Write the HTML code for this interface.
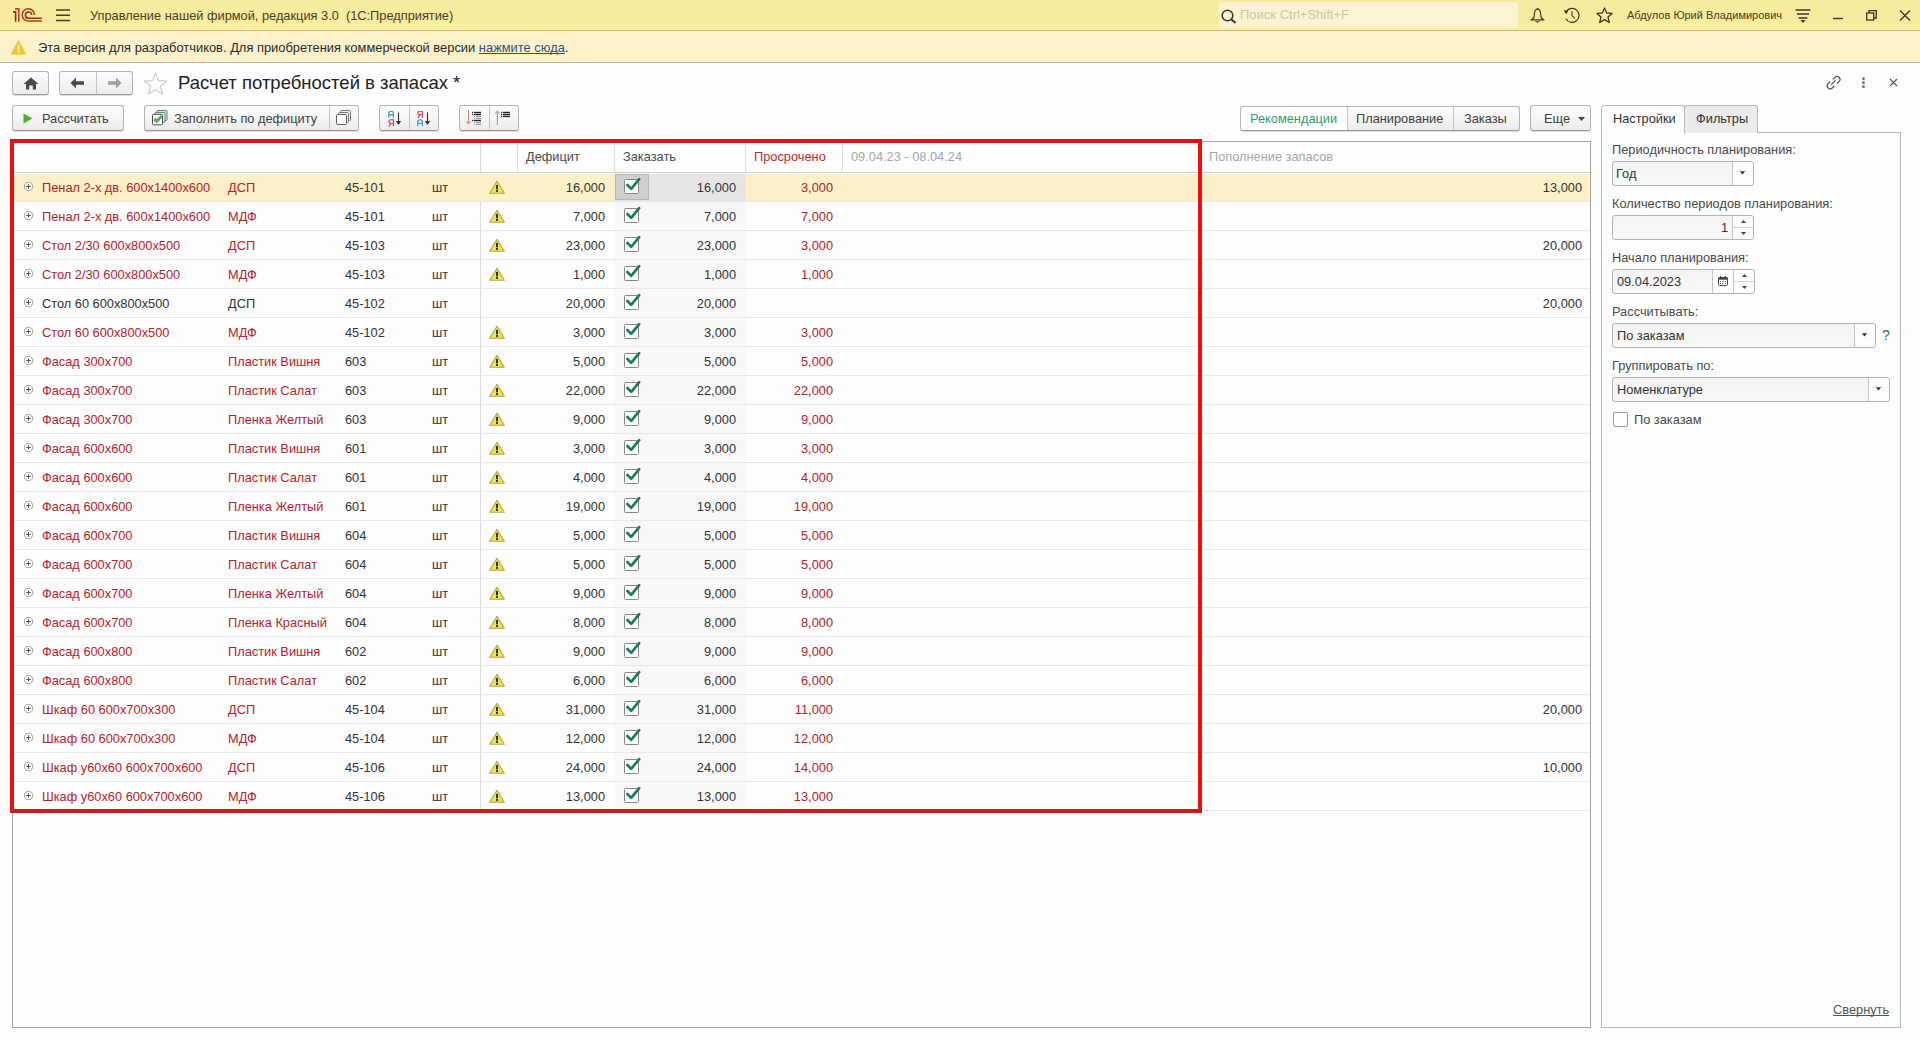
<!DOCTYPE html>
<html><head><meta charset="utf-8"><title>1C</title>
<style>
*{box-sizing:border-box;margin:0;padding:0}
html,body{width:1920px;height:1040px;overflow:hidden}
body{position:relative;background:#fdfdfd;font-family:"Liberation Sans",sans-serif;font-size:12.8px;color:#333}
.abs{position:absolute}
a{text-decoration-skip-ink:none}
svg{display:block}
/* top bar */
#topbar{position:absolute;left:0;top:0;width:1920px;height:31px;background:linear-gradient(#f6eb9f 0,#f6eb9f 65%,#f9f09a 100%);border-bottom:1px solid #c4b97e}
#warnbar{position:absolute;left:0;top:31px;width:1920px;height:32px;background:#fdf1c9;border-bottom:1px solid #bab6a4}
.tb-title{position:absolute;left:90px;top:8px;font-size:12.8px;color:#4a4020;white-space:pre;line-height:15px}
.search{position:absolute;left:1219px;top:2px;width:299px;height:26px;background:#fbf3d2;border-radius:2px}
.search span{position:absolute;left:21px;top:5px;color:#cfc6a6;font-size:13px;line-height:15px}
.user{position:absolute;left:1627px;top:8px;font-size:11px;color:#4a4020;line-height:14px}
.warn-text{position:absolute;left:38px;top:40px;font-size:12.9px;color:#2a2a2a;line-height:15px}
.warn-text a{color:#34507a;text-decoration:underline;text-decoration-skip-ink:none}
/* buttons */
.btn{position:absolute;height:26px;border:1px solid #b4b4b4;border-bottom-color:#9a9a9a;border-radius:3px;background:linear-gradient(#fdfdfd,#ececec);box-shadow:0 1px 0 rgba(0,0,0,.12)}
.btn .lbl{position:absolute;top:5px;line-height:15px;font-size:12.8px;color:#404040;white-space:nowrap}
.sep{position:absolute;top:0;bottom:0;width:1px;background:#c4c4c4}
.title{position:absolute;left:178px;top:73px;font-size:18.5px;color:#222;line-height:20px;white-space:nowrap}
/* table */
#table{position:absolute;left:12px;top:141px;width:1579px;height:887px;border:1px solid #a4a4a4;background:#fdfdfd}
.hdr{position:absolute;left:0;top:0;width:100%;height:31px;border-bottom:1px solid #cfcfcf;background:#fefefe}
.hdr .h{position:absolute;top:7px;line-height:15px;color:#4a4a4a;white-space:nowrap}
.hdr .hs{position:absolute;top:0;height:30px;width:1px;background:#dedede}
.vline{position:absolute;left:467px;top:0;width:1px;height:669px;background:#dadada}
.row{position:absolute;left:0;width:1577px;height:29px;border-bottom:1px solid #e8e8e8}
.row .t{position:absolute;top:0;line-height:29px;white-space:nowrap;color:#333}
.row .t.r{color:#b5232f}
.row.sel .selbg{position:absolute;left:0;right:0;top:1px;height:27px;background:#fbf0c6}
.exw{position:absolute;left:10px;top:8px}
.wiw{position:absolute;left:476px;top:7px}
.cbw{position:absolute;left:611px;top:2px}
.selq{position:absolute;left:602px;top:1px;width:131px;height:27px;background:#e5e5e5}
.selc{position:absolute;left:602px;top:1px;width:34px;height:26px;background:#cfcfcf;border:1px solid #b6b6b6}
/* right panel */
.tab{position:absolute;top:105px;height:28px;border:1px solid #b9b9b9;border-bottom:none;border-radius:3px 3px 0 0}
.tab span{position:absolute;top:5px;line-height:15px;color:#333;white-space:nowrap}
#panel{position:absolute;left:1601px;top:132px;width:300px;height:896px;border:1px solid #b9b9b9;background:#fdfdfd}
.lab{position:absolute;left:1612px;line-height:15px;color:#4a4a4a;white-space:nowrap}
.inp{position:absolute;height:25px;border:1px solid #b3b3b3;border-radius:3px;background:linear-gradient(#f3f4f3,#f7f8f7)}
.inp .v{position:absolute;top:4px;line-height:15px;color:#333;white-space:nowrap}
.inp .bt{position:absolute;top:0;bottom:0;right:0;background:#fdfdfd;border-left:1px solid #c4c4c4;border-radius:0 3px 3px 0}
.red{position:absolute;left:10px;top:139px;width:1192px;height:674px;border:4px solid;border-color:#d41616 #e80f0f #d41616 #e80f0f}

</style></head>
<body>
<div id="topbar">
  <svg class="abs" style="left:8px;top:4px" width="40" height="22" viewBox="0 0 40 22">
    <path d="M5 7.9 H7.6 V17.8" fill="none" stroke="#7e3412" stroke-width="1.6"/>
    <path d="M7 4.9 H10.8 V17.8" fill="none" stroke="#c2401e" stroke-width="1.6"/>
    <path d="M26.5 11 A6.15 6.15 0 1 0 20.35 17.1 H33.8" fill="none" stroke="#b8391a" stroke-width="1.5"/>
    <path d="M23.8 11 A3.2 3.2 0 1 0 20.6 14.3 H33.8" fill="none" stroke="#8e3614" stroke-width="1.5"/>
  </svg>
  <svg class="abs" style="left:56px;top:9px" width="14" height="13" viewBox="0 0 14 13"><path d="M0 1 H14 M0 6.3 H14 M0 11.5 H14" stroke="#4a4020" stroke-width="1.4"/></svg>
  <div class="tb-title">Управление нашей фирмой, редакция 3.0  (1С:Предприятие)</div>
  <div class="search">
    <svg class="abs" style="left:2px;top:7px" width="16" height="15" viewBox="0 0 16 15"><circle cx="6.5" cy="6.5" r="5.3" fill="none" stroke="#3a3420" stroke-width="1.5"/><path d="M10.5 10.5 L14.5 14" stroke="#3a3420" stroke-width="2"/></svg>
    <span>Поиск Ctrl+Shift+F</span>
  </div>
  <svg class="abs" style="left:1530px;top:7px" width="15" height="17" viewBox="0 0 15 17"><path d="M7.5 2.2 C5.4 2.2 4.6 4 4.4 6.5 L4 10 C3.7 11.3 2.3 12.2 1 12.9 H14 C12.7 12.2 11.3 11.3 11 10 L10.6 6.5 C10.4 4 9.6 2.2 7.5 2.2 Z" fill="none" stroke="#3f3820" stroke-width="1.15" stroke-linejoin="round"/><circle cx="7.5" cy="1.6" r="0.9" fill="#3f3820"/><path d="M4.6 14.3 H10.4 L7.5 15.8 Z" fill="#3f3820"/></svg>
  <svg class="abs" style="left:1562px;top:6px" width="20" height="19" viewBox="0 0 20 19"><path d="M3.94 12.8 A7 7 0 1 0 4.6 5" fill="none" stroke="#3f3820" stroke-width="1.2"/><path d="M1.6 4.6 L6.4 4.2 L4.3 8.2 Z" fill="#3f3820"/><path d="M10 5.3 V9.6 L12.9 12.3" fill="none" stroke="#3f3820" stroke-width="1.1"/></svg>
  <svg class="abs" style="left:1596px;top:7px" width="17" height="17" viewBox="0 0 17 17"><path d="M8.5 1 L10.7 6 L16 6.4 L12 10 L13.3 15.5 L8.5 12.6 L3.7 15.5 L5 10 L1 6.4 L6.3 6 Z" fill="none" stroke="#3f3820" stroke-width="1.3" stroke-linejoin="round"/></svg>
  <div class="user">Абдулов Юрий Владимирович</div>
  <svg class="abs" style="left:1795px;top:9px" width="16" height="15" viewBox="0 0 16 15"><path d="M0.5 1 H15.5 M2 5 H14 M3.5 9 H12.5" stroke="#3f3820" stroke-width="1.3"/><path d="M5.5 11 H10.5 L8 14 Z" fill="#3f3820"/></svg>
  <svg class="abs" style="left:1833px;top:17px" width="10" height="3" viewBox="0 0 10 3"><path d="M0 1.5 H10" stroke="#3f3820" stroke-width="1.4"/></svg>
  <svg class="abs" style="left:1866px;top:10px" width="11" height="11" viewBox="0 0 11 11"><rect x="0.7" y="3" width="7" height="7" fill="none" stroke="#3f3820" stroke-width="1.3"/><path d="M3 3 V0.7 H10.3 V8 H7.7" fill="none" stroke="#3f3820" stroke-width="1.3"/></svg>
  <svg class="abs" style="left:1899px;top:10px" width="12" height="11" viewBox="0 0 12 11"><path d="M1 0.5 L11 10.5 M11 0.5 L1 10.5" stroke="#3f3820" stroke-width="1.3"/></svg>
</div>
<div id="warnbar">
  <svg class="abs" style="left:11px;top:8px" width="16" height="16" viewBox="0 0 16 16"><path d="M7.5 1.3 L14.9 15.2 H0.1 Z" fill="#ebc82e" stroke="#ebc82e" stroke-width="0.6" stroke-linejoin="round"/><rect x="6.8" y="5.6" width="1.5" height="5.2" fill="#fff6d0"/><rect x="6.8" y="11.8" width="1.5" height="1.6" fill="#fff6d0"/></svg>
</div>
<div class="warn-text">Эта версия для разработчиков. Для приобретения коммерческой версии <a>нажмите сюда</a>.</div>

<!-- title row -->
<div class="btn" style="left:12px;top:71px;width:37px;height:24px">
  <svg class="abs" style="left:10px;top:4.5px" width="16" height="13" viewBox="0 0 16 13"><path d="M8 0.5 L15.5 7 H13 V12.5 H9.8 V8.5 H6.2 V12.5 H3 V7 H0.5 Z" fill="#4a4a4a"/></svg>
</div>
<div class="btn" style="left:59px;top:71px;width:74px;height:24px">
  <div class="sep" style="left:36px"></div>
  <svg class="abs" style="left:10px;top:5px" width="15" height="12" viewBox="0 0 15 12"><path d="M0.5 6 L6 0.5 V4.3 H14 V7.7 H6 V11.5 Z" fill="#4a4a4a"/></svg>
  <svg class="abs" style="left:47px;top:5px" width="15" height="12" viewBox="0 0 15 12"><path d="M14.5 6 L9 0.5 V4.3 H1 V7.7 H9 V11.5 Z" fill="#a0a0a0"/></svg>
</div>
<svg class="abs" style="left:143px;top:72px" width="25" height="23" viewBox="0 0 25 23"><path d="M12.5 1 L15.6 8.6 L23.8 9 L17.4 14.2 L19.6 22 L12.5 17.6 L5.4 22 L7.6 14.2 L1.2 9 L9.4 8.6 Z" fill="none" stroke="#c8c8c8" stroke-width="1.1" stroke-linejoin="round"/></svg>
<div class="title">Расчет потребностей в запасах *</div>
<svg class="abs" style="left:1825px;top:74px" width="17" height="17" viewBox="0 0 17 17"><path d="M7.8 5.4 L10.2 3 A3 3 0 0 1 14.4 7.2 L12 9.6 M5.2 7.6 L2.8 10 A3 3 0 0 0 7 14.2 L9.4 11.8 M6.2 10.8 L10.6 6.4" fill="none" stroke="#555" stroke-width="1.25"/></svg>
<svg class="abs" style="left:1861px;top:77px" width="5" height="12" viewBox="0 0 5 12"><circle cx="2.5" cy="1.7" r="1.4" fill="#666"/><circle cx="2.5" cy="5.7" r="1.4" fill="#666"/><circle cx="2.5" cy="9.7" r="1.4" fill="#666"/></svg>
<svg class="abs" style="left:1889px;top:78px" width="9" height="9" viewBox="0 0 9 9"><path d="M1 1 L8 8 M8 1 L1 8" stroke="#555" stroke-width="1.1"/></svg>

<!-- toolbar -->
<div class="btn" style="left:12px;top:105px;width:112px">
  <svg class="abs" style="left:10px;top:7px" width="10" height="11" viewBox="0 0 10 11"><path d="M0.5 0.5 L9.5 5.5 L0.5 10.5 Z" fill="#4caf2a"/></svg>
  <span class="lbl" style="left:29px">Рассчитать</span>
</div>
<div class="btn" style="left:144px;top:105px;width:215px">
  <svg class="abs" style="left:7px;top:4px" width="16" height="16" viewBox="0 0 16 16"><rect x="5" y="0.5" width="10" height="10" rx="1" fill="#e4f2e4" stroke="#5f7a6a"/><rect x="3" y="2.4" width="10" height="10" rx="1" fill="#def0dc" stroke="#56806a"/><rect x="0.5" y="4.4" width="10" height="10.4" rx="1" fill="#fff" stroke="#4a5058"/><path d="M2.4 9 L4.8 11.4 L9.6 6.2" fill="none" stroke="#2f7d2a" stroke-width="2.6"/><path d="M2.4 9 L4.8 11.4 L9.6 6.2" fill="none" stroke="#6cc04e" stroke-width="1.4"/></svg>
  <span class="lbl" style="left:29px">Заполнить по дефициту</span>
  <div class="sep" style="left:184px"></div>
  <svg class="abs" style="left:191px;top:4px" width="15" height="15" viewBox="0 0 15 15"><rect x="4.5" y="0.5" width="10" height="10" rx="1.2" fill="#eef2f2" stroke="#707878"/><rect x="2.5" y="2.5" width="10" height="10" rx="1.2" fill="#f2f5f5" stroke="#707878"/><rect x="0.5" y="4.5" width="10" height="10" rx="1.2" fill="#fff" stroke="#585c5e"/></svg>
</div>
<div class="btn" style="left:379px;top:105px;width:60px">
  <div class="sep" style="left:29px"></div>
  <svg class="abs" style="left:8px;top:5px" width="15" height="16" viewBox="0 0 15 16"><path d="M0.8 6.8 V2.5999999999999996 A2.3 2.3 0 0 1 5.3999999999999995 2.5999999999999996 V6.8 M0.8 3.9 H5.3999999999999995" fill="none" stroke="#3b8cc4" stroke-width="1.1"/><path d="M5.3999999999999995 15.2 V8.7 H2.6 A1.75 1.75 0 0 0 2.6 12.2 H5.3999999999999995 M3.2 12.2 L0.8 15.299999999999999" fill="none" stroke="#c43a4a" stroke-width="1.1"/><path d="M10.5 1.5 V13" stroke="#333" stroke-width="1.1"/><path d="M7.8 10 L10.5 14 L13.2 10 Z" fill="#333"/></svg>
  <svg class="abs" style="left:37px;top:5px" width="15" height="16" viewBox="0 0 15 16"><path d="M5.3999999999999995 6.8 V0.3 H2.6 A1.75 1.75 0 0 0 2.6 3.8 H5.3999999999999995 M3.2 3.8 L0.8 6.8999999999999995" fill="none" stroke="#c43a4a" stroke-width="1.1"/><path d="M0.8 15.2 V11.0 A2.3 2.3 0 0 1 5.3999999999999995 11.0 V15.2 M0.8 12.299999999999999 H5.3999999999999995" fill="none" stroke="#3b8cc4" stroke-width="1.1"/><path d="M10.5 1.5 V13" stroke="#333" stroke-width="1.1"/><path d="M7.8 10 L10.5 14 L13.2 10 Z" fill="#333"/></svg>
</div>
<div class="btn" style="left:459px;top:105px;width:60px">
  <div class="sep" style="left:29px"></div>
  <svg class="abs" style="left:4px;top:4px" width="20" height="17" viewBox="0 0 20 17"><path d="M4.5 0 V12" stroke="#c88880" stroke-width="1"/><path d="M1.4 11.4 L4.5 14.8 L7.6 11.4 Z" fill="#e49a8c"/><rect x="8" y="1.8" width="1.2" height="1.3" fill="#222"/><rect x="10" y="1.8" width="7" height="1.3" fill="#222"/><rect x="8" y="3.8" width="1.2" height="1.3" fill="#222"/><rect x="10" y="3.8" width="7" height="1.3" fill="#222"/><rect x="10" y="5.8" width="1" height="1.2" fill="#999"/><rect x="12" y="5.8" width="5" height="1.2" fill="#9a9a9a"/><rect x="10" y="7.8" width="1" height="1.2" fill="#999"/><rect x="12" y="7.8" width="5" height="1.2" fill="#9a9a9a"/><rect x="8" y="9.8" width="1.2" height="1.3" fill="#222"/><rect x="10" y="9.8" width="7" height="1.3" fill="#222"/><rect x="10" y="11.8" width="1" height="1.2" fill="#999"/><rect x="12" y="11.8" width="5" height="1.2" fill="#9a9a9a"/><rect x="10" y="13.8" width="1" height="1.2" fill="#999"/><rect x="12" y="13.8" width="5" height="1.2" fill="#9a9a9a"/></svg>
  <svg class="abs" style="left:33px;top:4px" width="20" height="17" viewBox="0 0 20 17"><path d="M4.4 3 V15" stroke="#b89c8c" stroke-width="1.1"/><path d="M1.3 3.6 L4.4 0.2 L7.5 3.6 Z" fill="#c4a898"/><rect x="8" y="1.8" width="1.2" height="1.3" fill="#222"/><rect x="10" y="1.8" width="7" height="1.3" fill="#222"/><rect x="8" y="3.8" width="1.2" height="1.3" fill="#222"/><rect x="10" y="3.8" width="7" height="1.3" fill="#222"/><rect x="8" y="5.8" width="1.2" height="1.3" fill="#222"/><rect x="10" y="5.8" width="7" height="1.3" fill="#222"/></svg>
</div>

<div class="btn" style="left:1240px;top:106px;width:280px;height:25px">
  <div class="abs" style="left:0;top:0;width:106px;height:23px;background:#fff;border-radius:3px 0 0 3px"></div>
  <div class="sep" style="left:106px"></div>
  <div class="sep" style="left:212px"></div>
  <span class="lbl" style="left:9px;top:4px;color:#2e9e6e">Рекомендации</span>
  <span class="lbl" style="left:115px;top:4px">Планирование</span>
  <span class="lbl" style="left:223px;top:4px">Заказы</span>
</div>
<div class="btn" style="left:1530px;top:105px;width:61px">
  <span class="lbl" style="left:13px">Еще</span>
  <svg class="abs" style="left:47px;top:11px" width="7" height="4" viewBox="0 0 7 4"><path d="M0 0 H7 L3.5 4 Z" fill="#444"/></svg>
</div>

<!-- table -->
<div id="table">
  <div class="hdr">
    <div class="hs" style="left:467px"></div>
    <div class="hs" style="left:504px"></div>
    <div class="hs" style="left:601px"></div>
    <div class="hs" style="left:732px"></div>
    <div class="hs" style="left:829px"></div>
    <div class="hs" style="left:1188px"></div>
    <span class="h" style="left:513px">Дефицит</span>
    <span class="h" style="left:610px">Заказать</span>
    <span class="h" style="left:741px;color:#c0282d">Просрочено</span>
    <span class="h" style="left:838px;color:#a6a6a6">09.04.23 - 08.04.24</span>
    <span class="h" style="left:1196px;color:#a6a6a6">Пополнение запасов</span>
  </div>
  <div class="abs" style="left:602px;top:31px;width:131px;height:638px;background:#f8f8f9"></div>
  <div class="vline"></div>
<div class="row sel" style="top:31px"><div class="selbg"></div><div class="selq"></div><div class="selc"></div><span class="exw"><svg class="ex" width="11" height="11" viewBox="0 0 11 11"><circle cx="5.5" cy="5.5" r="4.2" fill="#fff" stroke="#a0a0a0"/><path d="M5.5 3.2 V7.8 M3.2 5.5 H7.8" stroke="#555" stroke-width="1"/></svg></span><span class="t r" style="left:29px">Пенал 2-х дв. 600x1400x600</span><span class="t r" style="left:215px">ДСП</span><span class="t" style="left:332px">45-101</span><span class="t" style="left:419px">шт</span><span class="wiw"><svg class="wi" width="17" height="15" viewBox="0 0 17 15"><path d="M8 1.4 L15.3 13.3 L0.7 13.3 Z" fill="#ede258" stroke="#b5a848" stroke-width="1.1" stroke-linejoin="round"/><rect x="7" y="4.9" width="2" height="4.4" fill="#3a3010"/><rect x="7" y="10" width="2" height="1.9" fill="#3a3010"/></svg></span><span class="t rt" style="right:985px">16,000</span><span class="cbw"><svg class="cb" width="18" height="20" viewBox="0 0 18 20"><rect x="0.5" y="4.5" width="14" height="14" rx="1" fill="#fff" stroke="#8a8585"/><path d="M3.4 10 L7.2 13.9 L15.2 4.2" fill="none" stroke="#1c7c55" stroke-width="2.7" stroke-linecap="round" stroke-linejoin="round"/></svg></span><span class="t rt" style="right:854px">16,000</span><span class="t rt r" style="right:757px">3,000</span><span class="t rt" style="right:8px">13,000</span></div>
<div class="row" style="top:60px"><span class="exw"><svg class="ex" width="11" height="11" viewBox="0 0 11 11"><circle cx="5.5" cy="5.5" r="4.2" fill="#fff" stroke="#a0a0a0"/><path d="M5.5 3.2 V7.8 M3.2 5.5 H7.8" stroke="#555" stroke-width="1"/></svg></span><span class="t r" style="left:29px">Пенал 2-х дв. 600x1400x600</span><span class="t r" style="left:215px">МДФ</span><span class="t" style="left:332px">45-101</span><span class="t" style="left:419px">шт</span><span class="wiw"><svg class="wi" width="17" height="15" viewBox="0 0 17 15"><path d="M8 1.4 L15.3 13.3 L0.7 13.3 Z" fill="#ede258" stroke="#b5a848" stroke-width="1.1" stroke-linejoin="round"/><rect x="7" y="4.9" width="2" height="4.4" fill="#3a3010"/><rect x="7" y="10" width="2" height="1.9" fill="#3a3010"/></svg></span><span class="t rt" style="right:985px">7,000</span><span class="cbw"><svg class="cb" width="18" height="20" viewBox="0 0 18 20"><rect x="0.5" y="4.5" width="14" height="14" rx="1" fill="#fff" stroke="#8a8585"/><path d="M3.4 10 L7.2 13.9 L15.2 4.2" fill="none" stroke="#1c7c55" stroke-width="2.7" stroke-linecap="round" stroke-linejoin="round"/></svg></span><span class="t rt" style="right:854px">7,000</span><span class="t rt r" style="right:757px">7,000</span></div>
<div class="row" style="top:89px"><span class="exw"><svg class="ex" width="11" height="11" viewBox="0 0 11 11"><circle cx="5.5" cy="5.5" r="4.2" fill="#fff" stroke="#a0a0a0"/><path d="M5.5 3.2 V7.8 M3.2 5.5 H7.8" stroke="#555" stroke-width="1"/></svg></span><span class="t r" style="left:29px">Стол 2/30 600x800x500</span><span class="t r" style="left:215px">ДСП</span><span class="t" style="left:332px">45-103</span><span class="t" style="left:419px">шт</span><span class="wiw"><svg class="wi" width="17" height="15" viewBox="0 0 17 15"><path d="M8 1.4 L15.3 13.3 L0.7 13.3 Z" fill="#ede258" stroke="#b5a848" stroke-width="1.1" stroke-linejoin="round"/><rect x="7" y="4.9" width="2" height="4.4" fill="#3a3010"/><rect x="7" y="10" width="2" height="1.9" fill="#3a3010"/></svg></span><span class="t rt" style="right:985px">23,000</span><span class="cbw"><svg class="cb" width="18" height="20" viewBox="0 0 18 20"><rect x="0.5" y="4.5" width="14" height="14" rx="1" fill="#fff" stroke="#8a8585"/><path d="M3.4 10 L7.2 13.9 L15.2 4.2" fill="none" stroke="#1c7c55" stroke-width="2.7" stroke-linecap="round" stroke-linejoin="round"/></svg></span><span class="t rt" style="right:854px">23,000</span><span class="t rt r" style="right:757px">3,000</span><span class="t rt" style="right:8px">20,000</span></div>
<div class="row" style="top:118px"><span class="exw"><svg class="ex" width="11" height="11" viewBox="0 0 11 11"><circle cx="5.5" cy="5.5" r="4.2" fill="#fff" stroke="#a0a0a0"/><path d="M5.5 3.2 V7.8 M3.2 5.5 H7.8" stroke="#555" stroke-width="1"/></svg></span><span class="t r" style="left:29px">Стол 2/30 600x800x500</span><span class="t r" style="left:215px">МДФ</span><span class="t" style="left:332px">45-103</span><span class="t" style="left:419px">шт</span><span class="wiw"><svg class="wi" width="17" height="15" viewBox="0 0 17 15"><path d="M8 1.4 L15.3 13.3 L0.7 13.3 Z" fill="#ede258" stroke="#b5a848" stroke-width="1.1" stroke-linejoin="round"/><rect x="7" y="4.9" width="2" height="4.4" fill="#3a3010"/><rect x="7" y="10" width="2" height="1.9" fill="#3a3010"/></svg></span><span class="t rt" style="right:985px">1,000</span><span class="cbw"><svg class="cb" width="18" height="20" viewBox="0 0 18 20"><rect x="0.5" y="4.5" width="14" height="14" rx="1" fill="#fff" stroke="#8a8585"/><path d="M3.4 10 L7.2 13.9 L15.2 4.2" fill="none" stroke="#1c7c55" stroke-width="2.7" stroke-linecap="round" stroke-linejoin="round"/></svg></span><span class="t rt" style="right:854px">1,000</span><span class="t rt r" style="right:757px">1,000</span></div>
<div class="row" style="top:147px"><span class="exw"><svg class="ex" width="11" height="11" viewBox="0 0 11 11"><circle cx="5.5" cy="5.5" r="4.2" fill="#fff" stroke="#a0a0a0"/><path d="M5.5 3.2 V7.8 M3.2 5.5 H7.8" stroke="#555" stroke-width="1"/></svg></span><span class="t " style="left:29px">Стол 60 600x800x500</span><span class="t " style="left:215px">ДСП</span><span class="t" style="left:332px">45-102</span><span class="t" style="left:419px">шт</span><span class="t rt" style="right:985px">20,000</span><span class="cbw"><svg class="cb" width="18" height="20" viewBox="0 0 18 20"><rect x="0.5" y="4.5" width="14" height="14" rx="1" fill="#fff" stroke="#8a8585"/><path d="M3.4 10 L7.2 13.9 L15.2 4.2" fill="none" stroke="#1c7c55" stroke-width="2.7" stroke-linecap="round" stroke-linejoin="round"/></svg></span><span class="t rt" style="right:854px">20,000</span><span class="t rt" style="right:8px">20,000</span></div>
<div class="row" style="top:176px"><span class="exw"><svg class="ex" width="11" height="11" viewBox="0 0 11 11"><circle cx="5.5" cy="5.5" r="4.2" fill="#fff" stroke="#a0a0a0"/><path d="M5.5 3.2 V7.8 M3.2 5.5 H7.8" stroke="#555" stroke-width="1"/></svg></span><span class="t r" style="left:29px">Стол 60 600x800x500</span><span class="t r" style="left:215px">МДФ</span><span class="t" style="left:332px">45-102</span><span class="t" style="left:419px">шт</span><span class="wiw"><svg class="wi" width="17" height="15" viewBox="0 0 17 15"><path d="M8 1.4 L15.3 13.3 L0.7 13.3 Z" fill="#ede258" stroke="#b5a848" stroke-width="1.1" stroke-linejoin="round"/><rect x="7" y="4.9" width="2" height="4.4" fill="#3a3010"/><rect x="7" y="10" width="2" height="1.9" fill="#3a3010"/></svg></span><span class="t rt" style="right:985px">3,000</span><span class="cbw"><svg class="cb" width="18" height="20" viewBox="0 0 18 20"><rect x="0.5" y="4.5" width="14" height="14" rx="1" fill="#fff" stroke="#8a8585"/><path d="M3.4 10 L7.2 13.9 L15.2 4.2" fill="none" stroke="#1c7c55" stroke-width="2.7" stroke-linecap="round" stroke-linejoin="round"/></svg></span><span class="t rt" style="right:854px">3,000</span><span class="t rt r" style="right:757px">3,000</span></div>
<div class="row" style="top:205px"><span class="exw"><svg class="ex" width="11" height="11" viewBox="0 0 11 11"><circle cx="5.5" cy="5.5" r="4.2" fill="#fff" stroke="#a0a0a0"/><path d="M5.5 3.2 V7.8 M3.2 5.5 H7.8" stroke="#555" stroke-width="1"/></svg></span><span class="t r" style="left:29px">Фасад 300x700</span><span class="t r" style="left:215px">Пластик Вишня</span><span class="t" style="left:332px">603</span><span class="t" style="left:419px">шт</span><span class="wiw"><svg class="wi" width="17" height="15" viewBox="0 0 17 15"><path d="M8 1.4 L15.3 13.3 L0.7 13.3 Z" fill="#ede258" stroke="#b5a848" stroke-width="1.1" stroke-linejoin="round"/><rect x="7" y="4.9" width="2" height="4.4" fill="#3a3010"/><rect x="7" y="10" width="2" height="1.9" fill="#3a3010"/></svg></span><span class="t rt" style="right:985px">5,000</span><span class="cbw"><svg class="cb" width="18" height="20" viewBox="0 0 18 20"><rect x="0.5" y="4.5" width="14" height="14" rx="1" fill="#fff" stroke="#8a8585"/><path d="M3.4 10 L7.2 13.9 L15.2 4.2" fill="none" stroke="#1c7c55" stroke-width="2.7" stroke-linecap="round" stroke-linejoin="round"/></svg></span><span class="t rt" style="right:854px">5,000</span><span class="t rt r" style="right:757px">5,000</span></div>
<div class="row" style="top:234px"><span class="exw"><svg class="ex" width="11" height="11" viewBox="0 0 11 11"><circle cx="5.5" cy="5.5" r="4.2" fill="#fff" stroke="#a0a0a0"/><path d="M5.5 3.2 V7.8 M3.2 5.5 H7.8" stroke="#555" stroke-width="1"/></svg></span><span class="t r" style="left:29px">Фасад 300x700</span><span class="t r" style="left:215px">Пластик Салат</span><span class="t" style="left:332px">603</span><span class="t" style="left:419px">шт</span><span class="wiw"><svg class="wi" width="17" height="15" viewBox="0 0 17 15"><path d="M8 1.4 L15.3 13.3 L0.7 13.3 Z" fill="#ede258" stroke="#b5a848" stroke-width="1.1" stroke-linejoin="round"/><rect x="7" y="4.9" width="2" height="4.4" fill="#3a3010"/><rect x="7" y="10" width="2" height="1.9" fill="#3a3010"/></svg></span><span class="t rt" style="right:985px">22,000</span><span class="cbw"><svg class="cb" width="18" height="20" viewBox="0 0 18 20"><rect x="0.5" y="4.5" width="14" height="14" rx="1" fill="#fff" stroke="#8a8585"/><path d="M3.4 10 L7.2 13.9 L15.2 4.2" fill="none" stroke="#1c7c55" stroke-width="2.7" stroke-linecap="round" stroke-linejoin="round"/></svg></span><span class="t rt" style="right:854px">22,000</span><span class="t rt r" style="right:757px">22,000</span></div>
<div class="row" style="top:263px"><span class="exw"><svg class="ex" width="11" height="11" viewBox="0 0 11 11"><circle cx="5.5" cy="5.5" r="4.2" fill="#fff" stroke="#a0a0a0"/><path d="M5.5 3.2 V7.8 M3.2 5.5 H7.8" stroke="#555" stroke-width="1"/></svg></span><span class="t r" style="left:29px">Фасад 300x700</span><span class="t r" style="left:215px">Пленка Желтый</span><span class="t" style="left:332px">603</span><span class="t" style="left:419px">шт</span><span class="wiw"><svg class="wi" width="17" height="15" viewBox="0 0 17 15"><path d="M8 1.4 L15.3 13.3 L0.7 13.3 Z" fill="#ede258" stroke="#b5a848" stroke-width="1.1" stroke-linejoin="round"/><rect x="7" y="4.9" width="2" height="4.4" fill="#3a3010"/><rect x="7" y="10" width="2" height="1.9" fill="#3a3010"/></svg></span><span class="t rt" style="right:985px">9,000</span><span class="cbw"><svg class="cb" width="18" height="20" viewBox="0 0 18 20"><rect x="0.5" y="4.5" width="14" height="14" rx="1" fill="#fff" stroke="#8a8585"/><path d="M3.4 10 L7.2 13.9 L15.2 4.2" fill="none" stroke="#1c7c55" stroke-width="2.7" stroke-linecap="round" stroke-linejoin="round"/></svg></span><span class="t rt" style="right:854px">9,000</span><span class="t rt r" style="right:757px">9,000</span></div>
<div class="row" style="top:292px"><span class="exw"><svg class="ex" width="11" height="11" viewBox="0 0 11 11"><circle cx="5.5" cy="5.5" r="4.2" fill="#fff" stroke="#a0a0a0"/><path d="M5.5 3.2 V7.8 M3.2 5.5 H7.8" stroke="#555" stroke-width="1"/></svg></span><span class="t r" style="left:29px">Фасад 600x600</span><span class="t r" style="left:215px">Пластик Вишня</span><span class="t" style="left:332px">601</span><span class="t" style="left:419px">шт</span><span class="wiw"><svg class="wi" width="17" height="15" viewBox="0 0 17 15"><path d="M8 1.4 L15.3 13.3 L0.7 13.3 Z" fill="#ede258" stroke="#b5a848" stroke-width="1.1" stroke-linejoin="round"/><rect x="7" y="4.9" width="2" height="4.4" fill="#3a3010"/><rect x="7" y="10" width="2" height="1.9" fill="#3a3010"/></svg></span><span class="t rt" style="right:985px">3,000</span><span class="cbw"><svg class="cb" width="18" height="20" viewBox="0 0 18 20"><rect x="0.5" y="4.5" width="14" height="14" rx="1" fill="#fff" stroke="#8a8585"/><path d="M3.4 10 L7.2 13.9 L15.2 4.2" fill="none" stroke="#1c7c55" stroke-width="2.7" stroke-linecap="round" stroke-linejoin="round"/></svg></span><span class="t rt" style="right:854px">3,000</span><span class="t rt r" style="right:757px">3,000</span></div>
<div class="row" style="top:321px"><span class="exw"><svg class="ex" width="11" height="11" viewBox="0 0 11 11"><circle cx="5.5" cy="5.5" r="4.2" fill="#fff" stroke="#a0a0a0"/><path d="M5.5 3.2 V7.8 M3.2 5.5 H7.8" stroke="#555" stroke-width="1"/></svg></span><span class="t r" style="left:29px">Фасад 600x600</span><span class="t r" style="left:215px">Пластик Салат</span><span class="t" style="left:332px">601</span><span class="t" style="left:419px">шт</span><span class="wiw"><svg class="wi" width="17" height="15" viewBox="0 0 17 15"><path d="M8 1.4 L15.3 13.3 L0.7 13.3 Z" fill="#ede258" stroke="#b5a848" stroke-width="1.1" stroke-linejoin="round"/><rect x="7" y="4.9" width="2" height="4.4" fill="#3a3010"/><rect x="7" y="10" width="2" height="1.9" fill="#3a3010"/></svg></span><span class="t rt" style="right:985px">4,000</span><span class="cbw"><svg class="cb" width="18" height="20" viewBox="0 0 18 20"><rect x="0.5" y="4.5" width="14" height="14" rx="1" fill="#fff" stroke="#8a8585"/><path d="M3.4 10 L7.2 13.9 L15.2 4.2" fill="none" stroke="#1c7c55" stroke-width="2.7" stroke-linecap="round" stroke-linejoin="round"/></svg></span><span class="t rt" style="right:854px">4,000</span><span class="t rt r" style="right:757px">4,000</span></div>
<div class="row" style="top:350px"><span class="exw"><svg class="ex" width="11" height="11" viewBox="0 0 11 11"><circle cx="5.5" cy="5.5" r="4.2" fill="#fff" stroke="#a0a0a0"/><path d="M5.5 3.2 V7.8 M3.2 5.5 H7.8" stroke="#555" stroke-width="1"/></svg></span><span class="t r" style="left:29px">Фасад 600x600</span><span class="t r" style="left:215px">Пленка Желтый</span><span class="t" style="left:332px">601</span><span class="t" style="left:419px">шт</span><span class="wiw"><svg class="wi" width="17" height="15" viewBox="0 0 17 15"><path d="M8 1.4 L15.3 13.3 L0.7 13.3 Z" fill="#ede258" stroke="#b5a848" stroke-width="1.1" stroke-linejoin="round"/><rect x="7" y="4.9" width="2" height="4.4" fill="#3a3010"/><rect x="7" y="10" width="2" height="1.9" fill="#3a3010"/></svg></span><span class="t rt" style="right:985px">19,000</span><span class="cbw"><svg class="cb" width="18" height="20" viewBox="0 0 18 20"><rect x="0.5" y="4.5" width="14" height="14" rx="1" fill="#fff" stroke="#8a8585"/><path d="M3.4 10 L7.2 13.9 L15.2 4.2" fill="none" stroke="#1c7c55" stroke-width="2.7" stroke-linecap="round" stroke-linejoin="round"/></svg></span><span class="t rt" style="right:854px">19,000</span><span class="t rt r" style="right:757px">19,000</span></div>
<div class="row" style="top:379px"><span class="exw"><svg class="ex" width="11" height="11" viewBox="0 0 11 11"><circle cx="5.5" cy="5.5" r="4.2" fill="#fff" stroke="#a0a0a0"/><path d="M5.5 3.2 V7.8 M3.2 5.5 H7.8" stroke="#555" stroke-width="1"/></svg></span><span class="t r" style="left:29px">Фасад 600x700</span><span class="t r" style="left:215px">Пластик Вишня</span><span class="t" style="left:332px">604</span><span class="t" style="left:419px">шт</span><span class="wiw"><svg class="wi" width="17" height="15" viewBox="0 0 17 15"><path d="M8 1.4 L15.3 13.3 L0.7 13.3 Z" fill="#ede258" stroke="#b5a848" stroke-width="1.1" stroke-linejoin="round"/><rect x="7" y="4.9" width="2" height="4.4" fill="#3a3010"/><rect x="7" y="10" width="2" height="1.9" fill="#3a3010"/></svg></span><span class="t rt" style="right:985px">5,000</span><span class="cbw"><svg class="cb" width="18" height="20" viewBox="0 0 18 20"><rect x="0.5" y="4.5" width="14" height="14" rx="1" fill="#fff" stroke="#8a8585"/><path d="M3.4 10 L7.2 13.9 L15.2 4.2" fill="none" stroke="#1c7c55" stroke-width="2.7" stroke-linecap="round" stroke-linejoin="round"/></svg></span><span class="t rt" style="right:854px">5,000</span><span class="t rt r" style="right:757px">5,000</span></div>
<div class="row" style="top:408px"><span class="exw"><svg class="ex" width="11" height="11" viewBox="0 0 11 11"><circle cx="5.5" cy="5.5" r="4.2" fill="#fff" stroke="#a0a0a0"/><path d="M5.5 3.2 V7.8 M3.2 5.5 H7.8" stroke="#555" stroke-width="1"/></svg></span><span class="t r" style="left:29px">Фасад 600x700</span><span class="t r" style="left:215px">Пластик Салат</span><span class="t" style="left:332px">604</span><span class="t" style="left:419px">шт</span><span class="wiw"><svg class="wi" width="17" height="15" viewBox="0 0 17 15"><path d="M8 1.4 L15.3 13.3 L0.7 13.3 Z" fill="#ede258" stroke="#b5a848" stroke-width="1.1" stroke-linejoin="round"/><rect x="7" y="4.9" width="2" height="4.4" fill="#3a3010"/><rect x="7" y="10" width="2" height="1.9" fill="#3a3010"/></svg></span><span class="t rt" style="right:985px">5,000</span><span class="cbw"><svg class="cb" width="18" height="20" viewBox="0 0 18 20"><rect x="0.5" y="4.5" width="14" height="14" rx="1" fill="#fff" stroke="#8a8585"/><path d="M3.4 10 L7.2 13.9 L15.2 4.2" fill="none" stroke="#1c7c55" stroke-width="2.7" stroke-linecap="round" stroke-linejoin="round"/></svg></span><span class="t rt" style="right:854px">5,000</span><span class="t rt r" style="right:757px">5,000</span></div>
<div class="row" style="top:437px"><span class="exw"><svg class="ex" width="11" height="11" viewBox="0 0 11 11"><circle cx="5.5" cy="5.5" r="4.2" fill="#fff" stroke="#a0a0a0"/><path d="M5.5 3.2 V7.8 M3.2 5.5 H7.8" stroke="#555" stroke-width="1"/></svg></span><span class="t r" style="left:29px">Фасад 600x700</span><span class="t r" style="left:215px">Пленка Желтый</span><span class="t" style="left:332px">604</span><span class="t" style="left:419px">шт</span><span class="wiw"><svg class="wi" width="17" height="15" viewBox="0 0 17 15"><path d="M8 1.4 L15.3 13.3 L0.7 13.3 Z" fill="#ede258" stroke="#b5a848" stroke-width="1.1" stroke-linejoin="round"/><rect x="7" y="4.9" width="2" height="4.4" fill="#3a3010"/><rect x="7" y="10" width="2" height="1.9" fill="#3a3010"/></svg></span><span class="t rt" style="right:985px">9,000</span><span class="cbw"><svg class="cb" width="18" height="20" viewBox="0 0 18 20"><rect x="0.5" y="4.5" width="14" height="14" rx="1" fill="#fff" stroke="#8a8585"/><path d="M3.4 10 L7.2 13.9 L15.2 4.2" fill="none" stroke="#1c7c55" stroke-width="2.7" stroke-linecap="round" stroke-linejoin="round"/></svg></span><span class="t rt" style="right:854px">9,000</span><span class="t rt r" style="right:757px">9,000</span></div>
<div class="row" style="top:466px"><span class="exw"><svg class="ex" width="11" height="11" viewBox="0 0 11 11"><circle cx="5.5" cy="5.5" r="4.2" fill="#fff" stroke="#a0a0a0"/><path d="M5.5 3.2 V7.8 M3.2 5.5 H7.8" stroke="#555" stroke-width="1"/></svg></span><span class="t r" style="left:29px">Фасад 600x700</span><span class="t r" style="left:215px">Пленка Красный</span><span class="t" style="left:332px">604</span><span class="t" style="left:419px">шт</span><span class="wiw"><svg class="wi" width="17" height="15" viewBox="0 0 17 15"><path d="M8 1.4 L15.3 13.3 L0.7 13.3 Z" fill="#ede258" stroke="#b5a848" stroke-width="1.1" stroke-linejoin="round"/><rect x="7" y="4.9" width="2" height="4.4" fill="#3a3010"/><rect x="7" y="10" width="2" height="1.9" fill="#3a3010"/></svg></span><span class="t rt" style="right:985px">8,000</span><span class="cbw"><svg class="cb" width="18" height="20" viewBox="0 0 18 20"><rect x="0.5" y="4.5" width="14" height="14" rx="1" fill="#fff" stroke="#8a8585"/><path d="M3.4 10 L7.2 13.9 L15.2 4.2" fill="none" stroke="#1c7c55" stroke-width="2.7" stroke-linecap="round" stroke-linejoin="round"/></svg></span><span class="t rt" style="right:854px">8,000</span><span class="t rt r" style="right:757px">8,000</span></div>
<div class="row" style="top:495px"><span class="exw"><svg class="ex" width="11" height="11" viewBox="0 0 11 11"><circle cx="5.5" cy="5.5" r="4.2" fill="#fff" stroke="#a0a0a0"/><path d="M5.5 3.2 V7.8 M3.2 5.5 H7.8" stroke="#555" stroke-width="1"/></svg></span><span class="t r" style="left:29px">Фасад 600x800</span><span class="t r" style="left:215px">Пластик Вишня</span><span class="t" style="left:332px">602</span><span class="t" style="left:419px">шт</span><span class="wiw"><svg class="wi" width="17" height="15" viewBox="0 0 17 15"><path d="M8 1.4 L15.3 13.3 L0.7 13.3 Z" fill="#ede258" stroke="#b5a848" stroke-width="1.1" stroke-linejoin="round"/><rect x="7" y="4.9" width="2" height="4.4" fill="#3a3010"/><rect x="7" y="10" width="2" height="1.9" fill="#3a3010"/></svg></span><span class="t rt" style="right:985px">9,000</span><span class="cbw"><svg class="cb" width="18" height="20" viewBox="0 0 18 20"><rect x="0.5" y="4.5" width="14" height="14" rx="1" fill="#fff" stroke="#8a8585"/><path d="M3.4 10 L7.2 13.9 L15.2 4.2" fill="none" stroke="#1c7c55" stroke-width="2.7" stroke-linecap="round" stroke-linejoin="round"/></svg></span><span class="t rt" style="right:854px">9,000</span><span class="t rt r" style="right:757px">9,000</span></div>
<div class="row" style="top:524px"><span class="exw"><svg class="ex" width="11" height="11" viewBox="0 0 11 11"><circle cx="5.5" cy="5.5" r="4.2" fill="#fff" stroke="#a0a0a0"/><path d="M5.5 3.2 V7.8 M3.2 5.5 H7.8" stroke="#555" stroke-width="1"/></svg></span><span class="t r" style="left:29px">Фасад 600x800</span><span class="t r" style="left:215px">Пластик Салат</span><span class="t" style="left:332px">602</span><span class="t" style="left:419px">шт</span><span class="wiw"><svg class="wi" width="17" height="15" viewBox="0 0 17 15"><path d="M8 1.4 L15.3 13.3 L0.7 13.3 Z" fill="#ede258" stroke="#b5a848" stroke-width="1.1" stroke-linejoin="round"/><rect x="7" y="4.9" width="2" height="4.4" fill="#3a3010"/><rect x="7" y="10" width="2" height="1.9" fill="#3a3010"/></svg></span><span class="t rt" style="right:985px">6,000</span><span class="cbw"><svg class="cb" width="18" height="20" viewBox="0 0 18 20"><rect x="0.5" y="4.5" width="14" height="14" rx="1" fill="#fff" stroke="#8a8585"/><path d="M3.4 10 L7.2 13.9 L15.2 4.2" fill="none" stroke="#1c7c55" stroke-width="2.7" stroke-linecap="round" stroke-linejoin="round"/></svg></span><span class="t rt" style="right:854px">6,000</span><span class="t rt r" style="right:757px">6,000</span></div>
<div class="row" style="top:553px"><span class="exw"><svg class="ex" width="11" height="11" viewBox="0 0 11 11"><circle cx="5.5" cy="5.5" r="4.2" fill="#fff" stroke="#a0a0a0"/><path d="M5.5 3.2 V7.8 M3.2 5.5 H7.8" stroke="#555" stroke-width="1"/></svg></span><span class="t r" style="left:29px">Шкаф 60 600x700x300</span><span class="t r" style="left:215px">ДСП</span><span class="t" style="left:332px">45-104</span><span class="t" style="left:419px">шт</span><span class="wiw"><svg class="wi" width="17" height="15" viewBox="0 0 17 15"><path d="M8 1.4 L15.3 13.3 L0.7 13.3 Z" fill="#ede258" stroke="#b5a848" stroke-width="1.1" stroke-linejoin="round"/><rect x="7" y="4.9" width="2" height="4.4" fill="#3a3010"/><rect x="7" y="10" width="2" height="1.9" fill="#3a3010"/></svg></span><span class="t rt" style="right:985px">31,000</span><span class="cbw"><svg class="cb" width="18" height="20" viewBox="0 0 18 20"><rect x="0.5" y="4.5" width="14" height="14" rx="1" fill="#fff" stroke="#8a8585"/><path d="M3.4 10 L7.2 13.9 L15.2 4.2" fill="none" stroke="#1c7c55" stroke-width="2.7" stroke-linecap="round" stroke-linejoin="round"/></svg></span><span class="t rt" style="right:854px">31,000</span><span class="t rt r" style="right:757px">11,000</span><span class="t rt" style="right:8px">20,000</span></div>
<div class="row" style="top:582px"><span class="exw"><svg class="ex" width="11" height="11" viewBox="0 0 11 11"><circle cx="5.5" cy="5.5" r="4.2" fill="#fff" stroke="#a0a0a0"/><path d="M5.5 3.2 V7.8 M3.2 5.5 H7.8" stroke="#555" stroke-width="1"/></svg></span><span class="t r" style="left:29px">Шкаф 60 600x700x300</span><span class="t r" style="left:215px">МДФ</span><span class="t" style="left:332px">45-104</span><span class="t" style="left:419px">шт</span><span class="wiw"><svg class="wi" width="17" height="15" viewBox="0 0 17 15"><path d="M8 1.4 L15.3 13.3 L0.7 13.3 Z" fill="#ede258" stroke="#b5a848" stroke-width="1.1" stroke-linejoin="round"/><rect x="7" y="4.9" width="2" height="4.4" fill="#3a3010"/><rect x="7" y="10" width="2" height="1.9" fill="#3a3010"/></svg></span><span class="t rt" style="right:985px">12,000</span><span class="cbw"><svg class="cb" width="18" height="20" viewBox="0 0 18 20"><rect x="0.5" y="4.5" width="14" height="14" rx="1" fill="#fff" stroke="#8a8585"/><path d="M3.4 10 L7.2 13.9 L15.2 4.2" fill="none" stroke="#1c7c55" stroke-width="2.7" stroke-linecap="round" stroke-linejoin="round"/></svg></span><span class="t rt" style="right:854px">12,000</span><span class="t rt r" style="right:757px">12,000</span></div>
<div class="row" style="top:611px"><span class="exw"><svg class="ex" width="11" height="11" viewBox="0 0 11 11"><circle cx="5.5" cy="5.5" r="4.2" fill="#fff" stroke="#a0a0a0"/><path d="M5.5 3.2 V7.8 M3.2 5.5 H7.8" stroke="#555" stroke-width="1"/></svg></span><span class="t r" style="left:29px">Шкаф у60x60 600x700x600</span><span class="t r" style="left:215px">ДСП</span><span class="t" style="left:332px">45-106</span><span class="t" style="left:419px">шт</span><span class="wiw"><svg class="wi" width="17" height="15" viewBox="0 0 17 15"><path d="M8 1.4 L15.3 13.3 L0.7 13.3 Z" fill="#ede258" stroke="#b5a848" stroke-width="1.1" stroke-linejoin="round"/><rect x="7" y="4.9" width="2" height="4.4" fill="#3a3010"/><rect x="7" y="10" width="2" height="1.9" fill="#3a3010"/></svg></span><span class="t rt" style="right:985px">24,000</span><span class="cbw"><svg class="cb" width="18" height="20" viewBox="0 0 18 20"><rect x="0.5" y="4.5" width="14" height="14" rx="1" fill="#fff" stroke="#8a8585"/><path d="M3.4 10 L7.2 13.9 L15.2 4.2" fill="none" stroke="#1c7c55" stroke-width="2.7" stroke-linecap="round" stroke-linejoin="round"/></svg></span><span class="t rt" style="right:854px">24,000</span><span class="t rt r" style="right:757px">14,000</span><span class="t rt" style="right:8px">10,000</span></div>
<div class="row" style="top:640px"><span class="exw"><svg class="ex" width="11" height="11" viewBox="0 0 11 11"><circle cx="5.5" cy="5.5" r="4.2" fill="#fff" stroke="#a0a0a0"/><path d="M5.5 3.2 V7.8 M3.2 5.5 H7.8" stroke="#555" stroke-width="1"/></svg></span><span class="t r" style="left:29px">Шкаф у60x60 600x700x600</span><span class="t r" style="left:215px">МДФ</span><span class="t" style="left:332px">45-106</span><span class="t" style="left:419px">шт</span><span class="wiw"><svg class="wi" width="17" height="15" viewBox="0 0 17 15"><path d="M8 1.4 L15.3 13.3 L0.7 13.3 Z" fill="#ede258" stroke="#b5a848" stroke-width="1.1" stroke-linejoin="round"/><rect x="7" y="4.9" width="2" height="4.4" fill="#3a3010"/><rect x="7" y="10" width="2" height="1.9" fill="#3a3010"/></svg></span><span class="t rt" style="right:985px">13,000</span><span class="cbw"><svg class="cb" width="18" height="20" viewBox="0 0 18 20"><rect x="0.5" y="4.5" width="14" height="14" rx="1" fill="#fff" stroke="#8a8585"/><path d="M3.4 10 L7.2 13.9 L15.2 4.2" fill="none" stroke="#1c7c55" stroke-width="2.7" stroke-linecap="round" stroke-linejoin="round"/></svg></span><span class="t rt" style="right:854px">13,000</span><span class="t rt r" style="right:757px">13,000</span></div>
</div>
<div class="red"></div>

<!-- right panel -->
<div id="panel"></div>
<div class="tab" style="left:1601px;width:84px;background:#fdfdfd;height:29px;z-index:2"><span style="left:11px">Настройки</span></div>
<div class="tab" style="left:1684px;width:74px;background:#ebebeb"><span style="left:11px">Фильтры</span></div>
<div class="lab" style="top:142px">Периодичность планирования:</div>
<div class="inp" style="left:1612px;top:161px;width:142px"><span class="v" style="left:3px">Год</span><div class="bt" style="width:21px"><svg class="abs" style="left:6px;top:9px" width="7" height="4" viewBox="0 0 7 4"><path d="M0.8 0.3 H6.2 L3.5 3.5 Z" fill="#333"/></svg></div></div>
<div class="lab" style="top:196px">Количество периодов планирования:</div>
<div class="inp" style="left:1612px;top:215px;width:142px"><span class="v" style="right:25px">1</span><div class="bt" style="width:21px"><div class="abs" style="left:0;right:0;top:11px;height:1px;background:#d0d0d0"></div><svg class="abs" style="left:8px;top:4px" width="5" height="3" viewBox="0 0 5 3"><path d="M0 3 H5 L2.5 0 Z" fill="#444"/></svg><svg class="abs" style="left:8px;top:16px" width="5" height="3" viewBox="0 0 5 3"><path d="M0 0 H5 L2.5 3 Z" fill="#444"/></svg></div></div>
<div class="lab" style="top:250px">Начало планирования:</div>
<div class="inp" style="left:1612px;top:269px;width:143px"><span class="v" style="left:4px">09.04.2023</span><div class="bt" style="width:42px"><div class="abs" style="left:20px;top:0;bottom:0;width:1px;background:#c4c4c4"></div><svg class="abs" style="left:5px;top:6px" width="10" height="10" viewBox="0 0 10 10"><rect x="0.5" y="1.5" width="9" height="8" rx="1" fill="none" stroke="#444"/><rect x="0.5" y="1.5" width="9" height="2.2" fill="#444"/><path d="M2.5 0 V2 M7.5 0 V2" stroke="#444"/><path d="M2 5.5 H3 M4.5 5.5 H5.5 M7 5.5 H8 M2 7.5 H3 M4.5 7.5 H5.5 M7 7.5 H8" stroke="#444"/></svg><div class="abs" style="left:21px;right:0;top:11px;height:1px;background:#d0d0d0"></div><svg class="abs" style="left:29px;top:4px" width="5" height="3" viewBox="0 0 5 3"><path d="M0 3 H5 L2.5 0 Z" fill="#444"/></svg><svg class="abs" style="left:29px;top:16px" width="5" height="3" viewBox="0 0 5 3"><path d="M0 0 H5 L2.5 3 Z" fill="#444"/></svg></div></div>
<div class="lab" style="top:304px">Рассчитывать:</div>
<div class="inp" style="left:1612px;top:323px;width:264px"><span class="v" style="left:4px">По заказам</span><div class="bt" style="width:21px"><svg class="abs" style="left:6px;top:9px" width="7" height="4" viewBox="0 0 7 4"><path d="M0.8 0.3 H6.2 L3.5 3.5 Z" fill="#333"/></svg></div></div>
<div class="abs" style="left:1882px;top:328px;line-height:15px;color:#236e8a;font-size:14px">?</div>
<div class="lab" style="top:358px">Группировать по:</div>
<div class="inp" style="left:1612px;top:377px;width:278px"><span class="v" style="left:4px">Номенклатуре</span><div class="bt" style="width:21px"><svg class="abs" style="left:6px;top:9px" width="7" height="4" viewBox="0 0 7 4"><path d="M0.8 0.3 H6.2 L3.5 3.5 Z" fill="#333"/></svg></div></div>
<div class="abs" style="left:1613px;top:412px;width:15px;height:15px;border:1px solid #9a9a9a;border-radius:2px;background:#fff"></div>
<div class="lab" style="left:1634px;top:412px">По заказам</div>
<div class="abs" style="left:1833px;top:1002px;line-height:15px;color:#555;text-decoration:underline;text-decoration-skip-ink:none">Свернуть</div>

</body></html>
